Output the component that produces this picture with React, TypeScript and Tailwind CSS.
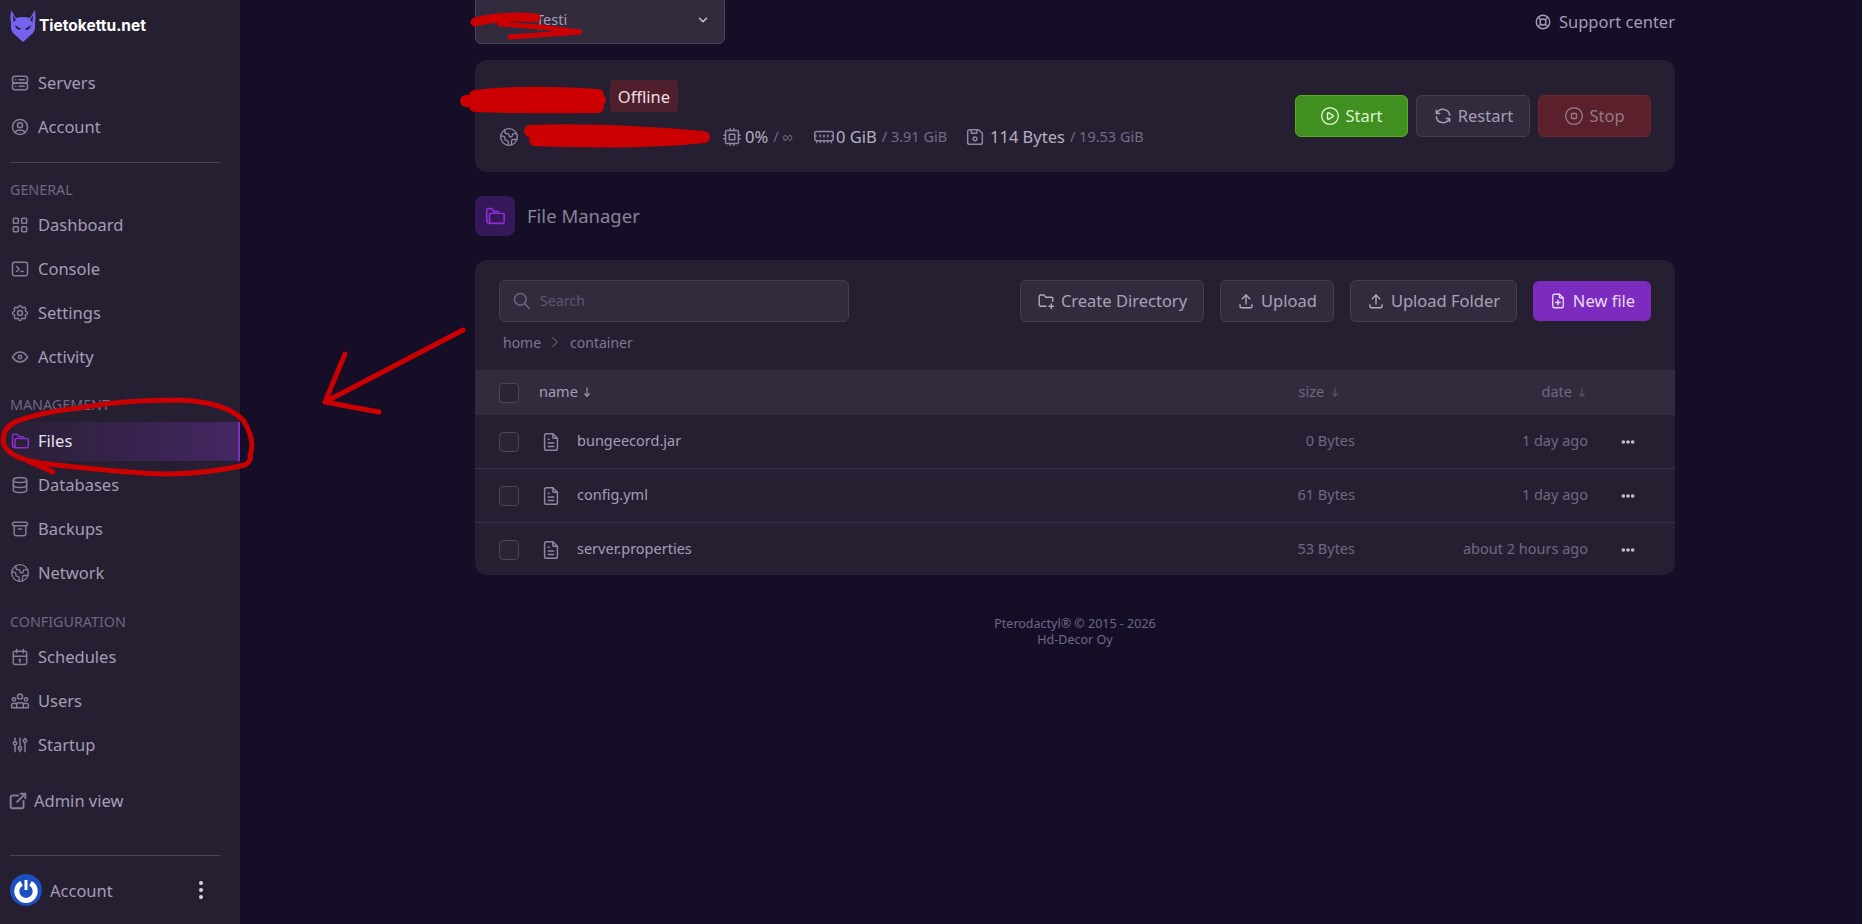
import React from "react";
import {
  TbServer2,
  TbUserCircle,
  TbLayoutGrid,
  TbTerminal2,
  TbSettings,
  TbEye,
  TbDatabase,
  TbArchive,
  TbCalendar,
  TbAdjustments,
  TbExternalLink,
  TbCpu,
  TbDeviceFloppy,
  TbRefresh,
  TbLifebuoy,
  TbFolderPlus,
  TbUpload,
  TbFilePlus,
  TbFileText,
  TbDots,
  TbChevronDown,
  TbChevronRight,
  TbSearch,
  TbArrowNarrowDown,
} from "react-icons/tb";
import { CirclePlay, CircleStop, Earth, MemoryStick } from "lucide-react";

const fontCls = "font-['Noto_Sans',sans-serif]";

const FilesIcon = ({ size = 20 }: { size?: number }) => (
  <svg width={size} height={size} viewBox="0 0 24 24" fill="none" stroke="currentColor" strokeWidth="1.8" strokeLinecap="round" strokeLinejoin="round">
    <path d="M3 17V6a2 2 0 0 1 2-2h3.5l2.5 3h5" />
    <rect x="6" y="9" width="16" height="11" rx="2" />
    <path d="M3 17a3 3 0 0 0 3 3" />
  </svg>
);

const UsersIcon = ({ size = 20 }: { size?: number }) => (
  <svg width={size} height={size} viewBox="0 0 24 24" fill="none" stroke="currentColor" strokeWidth="1.8" strokeLinecap="round" strokeLinejoin="round">
    <circle cx="12" cy="6.5" r="3" />
    <circle cx="4.8" cy="10" r="2" />
    <circle cx="19.2" cy="10" r="2" />
    <path d="M8 20v-4a2 2 0 0 1 2-2h4a2 2 0 0 1 2 2v4" />
    <path d="M8 15H3.5A1.5 1.5 0 0 0 2 16.5V20h20v-3.500a1.500 1.500 0 0 0-1.500-1.500H16" />
  </svg>
);

const NavItem = ({ icon, label, active }: { icon: React.ReactNode; label: string; active?: boolean }) =>
  active ? (
    <div className="flex h-[44px] items-center">
      <div className="flex h-[39px] w-full items-center gap-[8px] border-r-2 border-[#7b2fc4] bg-gradient-to-r from-[#281f33] to-[#442663] pl-[10px] text-[#e5e0ec]">
        <span className="text-[#8a2fd0]">{icon}</span>
        <span>{label}</span>
      </div>
    </div>
  ) : (
    <div className="flex h-[44px] items-center gap-[8px] pl-[10px] text-[#a59db5]">
      <span className="text-[#867d97]">{icon}</span>
      <span>{label}</span>
    </div>
  );

const SectionLabel = ({ children, className }: { children: string; className: string }) => (
  <div className={`pl-[10px] text-[14.3px] leading-5 text-[#6f6683] ${className}`}>{children}</div>
);

const Sidebar = () => (
  <aside className="flex h-[924px] w-[240px] shrink-0 flex-col bg-[#261f31] text-[16.5px]">
    <div className="flex h-[60px] items-start pl-[10px] pt-[10px]">
      <svg width="26" height="32" viewBox="0 0 26 32">
        <path
          d="M1 0 L6 8 Q13 6 20 8 L25 0 Q26 8 25 14 L25 19 L23 23 L13 32 L3 23 L1 19 L1 14 Q0 8 1 0Z"
          fill="#7562f0"
        />
        <path d="M5 15 L11 19 L9 20 Q6 19 5 15Z M21 15 L15 19 L17 20 Q20 19 21 15Z" fill="#261f31" />
        <path d="M3 5 L3.500 12 L6 10Z M23 5 L22.500 12 L20 10Z" fill="#261f31" />
      </svg>
      <span className="ml-[3px] mt-[6px] font-['Inter',sans-serif] text-[15.5px] font-bold leading-5 text-white">Tietokettu.net</span>
    </div>
    <div className="mt-[1px]">
      <NavItem icon={<TbServer2 size={20} strokeWidth={1.8} />} label="Servers" />
      <NavItem icon={<TbUserCircle size={20} strokeWidth={1.8} />} label="Account" />
    </div>
    <div className="ml-[10px] mr-[20px] mt-[13px] h-[1px] bg-[#4a4359]" />
    <SectionLabel className="mt-[17px]">GENERAL</SectionLabel>
    <div className="mt-[3px]">
      <NavItem icon={<TbLayoutGrid size={20} strokeWidth={1.8} />} label="Dashboard" />
      <NavItem icon={<TbTerminal2 size={20} strokeWidth={1.8} />} label="Console" />
      <NavItem icon={<TbSettings size={20} strokeWidth={1.8} />} label="Settings" />
      <NavItem icon={<TbEye size={20} strokeWidth={1.8} />} label="Activity" />
    </div>
    <SectionLabel className="mt-[16px]">MANAGEMENT</SectionLabel>
    <div className="mt-[4px]">
      <NavItem active icon={<FilesIcon />} label="Files" />
      <NavItem icon={<TbDatabase size={20} strokeWidth={1.8} />} label="Databases" />
      <NavItem icon={<TbArchive size={20} strokeWidth={1.8} />} label="Backups" />
      <NavItem icon={<Earth size={20} strokeWidth={1.6} />} label="Network" />
    </div>
    <SectionLabel className="mt-[17px]">CONFIGURATION</SectionLabel>
    <div className="mt-[3px]">
      <NavItem icon={<TbCalendar size={20} strokeWidth={1.8} />} label="Schedules" />
      <NavItem icon={<UsersIcon />} label="Users" />
      <NavItem icon={<TbAdjustments size={20} strokeWidth={1.8} />} label="Startup" />
    </div>
    <div className="mt-[12px] flex h-[44px] items-center gap-[5px] pl-[7px] text-[#a59db5]">
      <span className="text-[#867d97]">
        <TbExternalLink size={22} strokeWidth={2.1} />
      </span>
      <span>Admin view</span>
    </div>
    <div className="ml-[10px] mr-[20px] mt-auto h-[1px] bg-[#4a4359]" />
    <div className="flex h-[68px] items-center pl-[10px]">
      <svg width="32" height="32" viewBox="0 0 32 32">
        <circle cx="16" cy="16" r="16" fill="#1d4fc0" />
        <path d="M11.500 9.200 A9.200 9.200 0 1 0 20.500 9.200" fill="none" stroke="#fff" strokeWidth="5" />
        <path d="M16 6 V16" stroke="#fff" strokeWidth="3" />
      </svg>
      <span className="ml-[8px] pt-[2px] text-[#a59db5]">Account</span>
      <span className="ml-auto mr-[37px] flex flex-col gap-[3px]">
        <span className="h-[4px] w-[4px] rounded-full bg-[#d8d4de]" />
        <span className="h-[4px] w-[4px] rounded-full bg-[#d8d4de]" />
        <span className="h-[4px] w-[4px] rounded-full bg-[#d8d4de]" />
      </span>
    </div>
  </aside>
);

const Stat = ({ icon, value, total, className }: { icon: React.ReactNode; value: string; total: string; className: string }) => (
  <div className={`flex items-center ${className}`}>
    <span className="text-[#8f869f]">{icon}</span>
    <span className="text-[#b6afc3]">{value}</span>
    <span className="ml-[5px] text-[14.5px] text-[#736a86]">{total}</span>
  </div>
);

const ToolButton = ({ icon, label, className }: { icon: React.ReactNode; label: string; className: string }) => (
  <button className={`flex h-[42px] items-center justify-center gap-[6px] rounded-[6px] border border-[#453e52] bg-[#322b3d] text-[#a9a1b8] ${className}`}>
    <span className="text-[#b3acc0]">{icon}</span>
    {label}
  </button>
);

const Checkbox = () => <span className="block h-[20px] w-[20px] shrink-0 rounded-[4px] border border-[#4d4659] bg-[#2b2436]" />;

const files = [
  { name: "bungeecord.jar", size: "0 Bytes", date: "1 day ago", height: "h-[54px]" },
  { name: "config.yml", size: "61 Bytes", date: "1 day ago", height: "h-[54px]" },
  { name: "server.properties", size: "53 Bytes", date: "about 2 hours ago", height: "h-[53px]" },
];

const FileCard = () => (
  <section className="mt-[24px] h-[315px] overflow-hidden rounded-[12px] bg-[#261f31]">
    <div className="flex justify-between px-[24px] pt-[20px]">
      <div className="flex h-[42px] w-[350px] items-center gap-[8px] rounded-[6px] border border-[#453e52] bg-[#322b3d] pl-[12px] text-[14.2px] text-[#5f5670]">
        <TbSearch size={20} strokeWidth={1.8} className="text-[#6f6680]" />
        Search
      </div>
      <div className="flex gap-[16px] text-[16.5px]">
        <ToolButton icon={<TbFolderPlus size={18} strokeWidth={1.8} />} label="Create Directory" className="w-[184px]" />
        <ToolButton icon={<TbUpload size={18} strokeWidth={1.8} />} label="Upload" className="w-[114px]" />
        <ToolButton icon={<TbUpload size={18} strokeWidth={1.8} />} label="Upload Folder" className="w-[167px]" />
        <button className="mt-[1px] flex h-[40px] w-[118px] items-center justify-center gap-[6px] rounded-[6px] bg-[#7b2cbf] text-[#e6daf2]">
          <TbFilePlus size={18} strokeWidth={1.8} />
          New file
        </button>
      </div>
    </div>
    <div className="mt-[10px] flex h-[20px] items-center pl-[28px] text-[14px] text-[#7f7691]">
      home
      <TbChevronRight size={18} strokeWidth={1.5} className="ml-[5px] mr-[6px] text-[#5c5369]" />
      container
    </div>
    <div className="mt-[18px] flex h-[45px] items-center bg-[#322b3d] pl-[24px] text-[14.5px]">
      <Checkbox />
      <span className="mb-[2px] ml-[20px] flex items-center text-[#a59db5]">
        name
        <TbArrowNarrowDown size={14} className="ml-[2px]" />
      </span>
      <span className="mb-[2px] ml-auto flex w-[46px] items-center text-[#716881]">
        size
        <TbArrowNarrowDown size={14} className="ml-[4px] text-[#5a5168]" />
      </span>
      <span className="mb-[2px] ml-[197px] mr-[86px] flex items-center text-[#716881]">
        date
        <TbArrowNarrowDown size={14} className="ml-[3px] text-[#5a5168]" />
      </span>
    </div>
    {files.map((file, i) => (
      <div key={file.name} className={`flex items-center pl-[24px] text-[14.5px] ${file.height} ${i < 2 ? "border-b border-[#37304a]" : ""}`}>
        <Checkbox />
        <TbFileText size={22} strokeWidth={1.6} className="ml-[21px] text-[#8f869f]" />
        <span className="mb-[1px] ml-[15px] text-[#a59db5]">{file.name}</span>
        <span className="mb-[1px] ml-auto text-[#716881]">{file.size}</span>
        <span className="mb-[1px] w-[233px] text-right text-[#716881]">{file.date}</span>
        <TbDots size={16} strokeWidth={3.5} className="ml-[32px] mr-[39px] text-[#c5c0cd]" />
      </div>
    ))}
  </section>
);

export default function App() {
  return (
    <div className={`relative flex h-[924px] w-[1862px] overflow-hidden bg-[#150e26] ${fontCls}`}>
      <Sidebar />
      <main className="ml-[235px] w-[1200px] text-[16.5px]">
        <div className="mt-[-4px] flex items-start justify-between">
          <div className="flex h-[48px] w-[250px] items-center justify-between rounded-[6px] border border-[#4a4359] bg-[#322b3d] pl-[60px] pr-[14px] text-[14.5px] text-[#a59db5]">
            Testi
            <TbChevronDown size={14} strokeWidth={2.4} className="text-[#d0cbd8]" />
          </div>
          <div className="mt-[14px] flex items-center gap-[7px] text-[#a59db5]">
            <TbLifebuoy size={18} strokeWidth={1.8} className="text-[#a59db5]" />
            Support center
          </div>
        </div>

        <section className="mt-[16px] flex h-[112px] rounded-[12px] bg-[#261f31]">
          <div className="w-[820px]">
            <div className="ml-[135px] mt-[20px] flex h-[32px] w-[68px] items-center justify-center rounded-[4px] bg-[#4f1f2d] pt-[2px] text-[#f0dfe0]">Offline</div>
            <div className="relative mt-[15px] h-[20px]">
              <span className="absolute left-[24px] top-0 text-[#8f869f]">
                <Earth size={20} strokeWidth={1.6} />
              </span>
              <div className="flex h-[20px] pl-[246px]">
                <Stat className="w-[92px]" icon={<TbCpu size={22} strokeWidth={1.6} className="mr-[2px]" />} value="0%" total="/ ∞" />
                <Stat className="w-[151px]" icon={<MemoryStick size={22} strokeWidth={1.6} className="mr-[1px]" />} value="0 GiB" total="/ 3.91 GiB" />
                <Stat className="" icon={<TbDeviceFloppy size={22} strokeWidth={1.6} className="mr-[4px]" />} value="114 Bytes" total="/ 19.53 GiB" />
              </div>
            </div>
          </div>
          <div className="ml-auto mr-[24px] mt-[35px] flex gap-[8px]">
            <button className="flex h-[42px] w-[113px] items-center justify-center gap-[5px] rounded-[6px] border border-[#58b01f] bg-[#3f9020] text-[#dff2d0]">
              <CirclePlay size={20} strokeWidth={1.7} />
              Start
            </button>
            <button className="flex h-[42px] w-[114px] items-center justify-center gap-[5px] rounded-[6px] border border-[#453e52] bg-[#322b3d] text-[#a59db5]">
              <TbRefresh size={20} strokeWidth={1.8} />
              Restart
            </button>
            <button className="flex h-[42px] w-[113px] items-center justify-center gap-[5px] rounded-[6px] border border-[#6e2630] bg-[#5a202b] text-[#917a88]">
              <CircleStop size={20} strokeWidth={1.7} />
              Stop
            </button>
          </div>
        </section>

        <div className="mt-[24px] flex items-center gap-[12px]">
          <span className="flex h-[40px] w-[40px] items-center justify-center rounded-[8px] bg-[#35185a] text-[#8a2fd0]">
            <FilesIcon size={22} />
          </span>
          <span className="text-[18.5px] text-[#8b8299]">File Manager</span>
        </div>

        <FileCard />

        <div className="mt-[41px] text-center text-[12.5px] leading-[16px] text-[#6f688f]">
          <div>Pterodactyl® © 2015 - 2026</div>
          <div>Hd-Decor Oy</div>
        </div>
      </main>

      {/* hand drawn red marks on top of the screenshot */}
      <svg width="1862" height="924" className="pointer-events-none absolute left-0 top-0" fill="none" stroke="#cc0000" strokeLinecap="round" strokeLinejoin="round">
        <path
          strokeWidth="5"
          d="M250 455 Q256 440 243 420 Q225 402 180 400 Q120 400 80 408 Q40 412 15 422 Q0 430 4 445 Q10 458 40 463 Q100 470 130 472 Q190 478 245 465 Q252 460 250 455 M28 461 L53 472"
        />
        <path strokeWidth="5" d="M463 330 L325 402 L345 354 M325 402 L379 412" />
        <path strokeWidth="9" d="M475 22 Q500 15 536 18" />
        <path strokeWidth="5" d="M500 24 Q540 26 580 32 Q550 34 510 37" />
        <path strokeWidth="12" d="M475 96 Q520 90 598 95 M466 101 Q530 100 600 100 M475 106 Q530 108 598 107" />
        <path strokeWidth="12" d="M530 131 Q600 128 704 137 Q640 144 535 140" />
      </svg>
    </div>
  );
}
